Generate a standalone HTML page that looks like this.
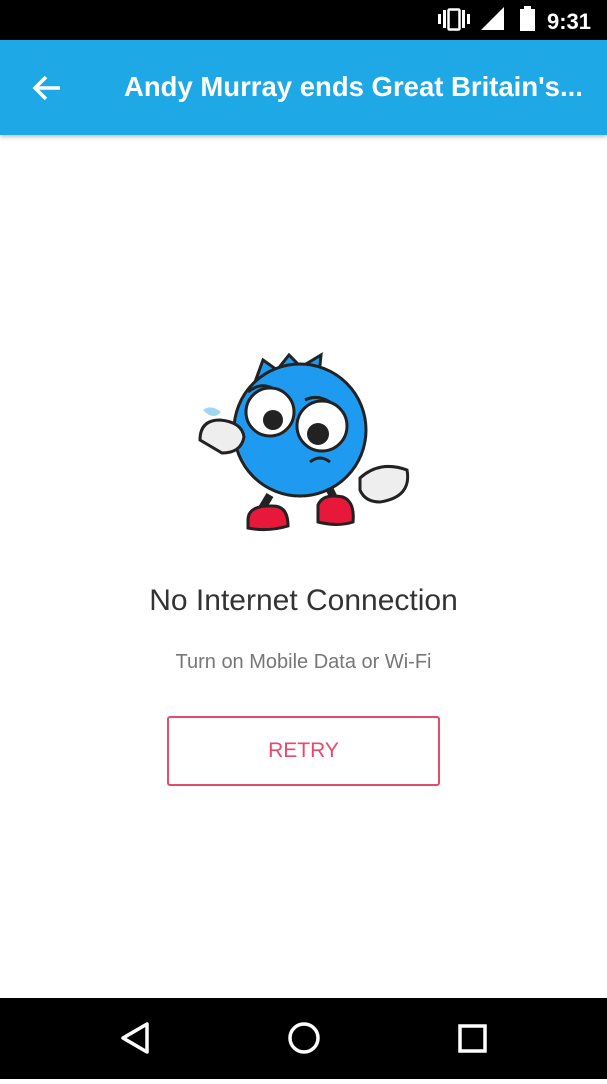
<!DOCTYPE html>
<html><head><meta charset="utf-8"><style>
*{margin:0;padding:0;box-sizing:border-box}
body{width:607px;height:1079px;background:#fff;font-family:"Liberation Sans",sans-serif;position:relative;overflow:hidden}
.sb{position:absolute;top:0;left:0;width:607px;height:40px;background:#000}
.ab{position:absolute;top:40px;left:0;width:607px;height:95px;background:#1ea9e6;box-shadow:0 2px 4px rgba(0,0,0,.25)}
.ab .t{position:absolute;left:124px;top:31px;color:#fff;font-size:27.5px;font-weight:bold;white-space:nowrap}
.nb{position:absolute;bottom:0;left:0;width:607px;height:81px;background:#000}
.h{position:absolute;top:584px;width:607px;text-align:center;font-size:30px;color:#333}
.s{position:absolute;top:651px;width:607px;text-align:center;font-size:20px;color:#777}
.btn{position:absolute;left:167px;top:716px;width:273px;height:70px;border:2px solid #e84a6c;border-radius:3px;color:#e84a6c;font-size:21px;text-align:center;line-height:66px}
</style></head><body>
<div class="sb">
<svg width="607" height="40" style="position:absolute;left:0;top:0">
<rect x="438" y="14" width="3" height="10" fill="#fff"/><rect x="443" y="10" width="3" height="18" fill="#fff"/>
<rect x="448.5" y="9.5" width="11" height="20" rx="1" fill="none" stroke="#fff" stroke-width="2.5"/>
<rect x="462" y="10" width="3" height="18" fill="#fff"/><rect x="467" y="14" width="3" height="10" fill="#fff"/>
<polygon points="481,30 504,30 504,7" fill="#fff"/>
<rect x="520" y="9" width="15" height="22" fill="#fff"/><rect x="524" y="6" width="7" height="4" fill="#fff"/>
<text x="547" y="29" fill="#fff" font-family="Liberation Sans" font-size="22" font-weight="bold">9:31</text>
</svg></div>
<div class="ab">
<svg width="40" height="40" style="position:absolute;left:28px;top:28px"><path d="M32 20H8M18 9 7 20l11 11" stroke="#fff" stroke-width="3.5" fill="none"/></svg>
<div class="t">Andy Murray ends Great Britain's...</div></div>
<svg width="607" height="250" style="position:absolute;left:0;top:330px" viewBox="0 330 607 250">
<g stroke="#222" stroke-width="3">
<path d="M270 495l-12 20M330 490l10 20" stroke-width="8"/>
<path d="M248 520q0-15 25-14 15 0 15 20-20 6-40 2z" fill="#e8183a"/>
<path d="M318 505q5-12 25-8 12 5 10 25-15 5-35 0z" fill="#e8183a"/>
<path d="M255 382l8-22 14 10 12-15 12 12 20-12 -2 20 22 8-10 12" fill="#1e9af0"/>
<circle cx="300" cy="430" r="66" fill="#1e9af0"/>
<circle cx="270" cy="412" r="24" fill="#fff"/><circle cx="322" cy="426" r="25" fill="#fff"/>
<circle cx="273" cy="420" r="10" fill="#222" stroke="none"/><circle cx="318" cy="434" r="11" fill="#222" stroke="none"/>
<path d="M248 392q12-10 24-4M305 400q12-6 25 2" fill="none"/>
<path d="M310 462q10-8 20 0" fill="none"/>
<path d="M200 440q0-20 20-20 22 2 24 17 -3 16-22 16z" fill="#eee"/>
<path d="M360 478q20-18 47-8 5 27-27 32-15 0-20-12z" fill="#eee"/>
</g>
<path d="M203 410q8-6 18 2-8 9-18-2z" fill="#9fd6f5"/>
</svg>
<div class="h">No Internet Connection</div>
<div class="s">Turn on Mobile Data or Wi-Fi</div>
<div class="btn">RETRY</div>
<div class="nb">
<svg width="607" height="81">
<path d="M147 26v28L123 40z" fill="none" stroke="#fff" stroke-width="3.5" stroke-linejoin="round"/>
<circle cx="304" cy="40" r="14" fill="none" stroke="#fff" stroke-width="3.5"/>
<rect x="460" y="28" width="25" height="25" fill="none" stroke="#fff" stroke-width="3.5"/>
</svg></div>
</body></html>
